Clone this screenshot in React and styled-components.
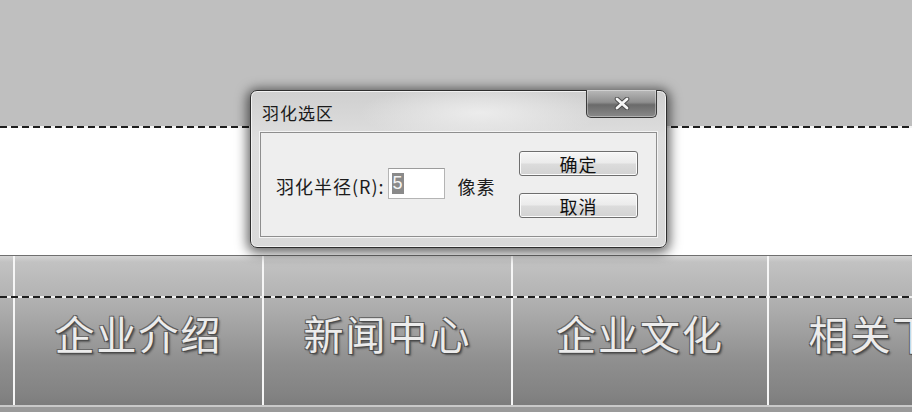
import React from "react";
import styled, { createGlobalStyle } from "styled-components";

const GlobalStyle = createGlobalStyle`
  html, body {
    margin: 0;
    padding: 0;
    background: #ffffff;
  }
  body {
    font-family: "Noto Sans CJK SC", "Noto Sans", sans-serif;
  }
`;

const navItems = ["", "企业介绍", "新闻中心", "企业文化", "相关下载"];
const navWidths = [13, 249, 249, 256, 249];

const Page = styled.div`
  position: relative;
  width: 912px;
  height: 412px;
  overflow: hidden;
  display: flex;
  flex-direction: column;
  background: #ffffff;
`;

const TopBand = styled.div`
  height: 126px;
  background: #bfbfbf;
  flex-shrink: 0;
`;

const Ants = styled.div`
  height: 2px;
  flex-shrink: 0;
  background: repeating-linear-gradient(90deg, #1e1e1e 0 7px, #f2f2f2 7px 11px);
`;

const WhiteBand = styled.div`
  height: 127px;
  flex-shrink: 0;
  background: #ffffff;
`;

const NavBar = styled.div`
  position: relative;
  display: flex;
  height: 149px;
  flex-shrink: 0;
  overflow: hidden;
  border-top: 1px solid #6f6f6f;
  border-bottom: 2px solid #c9c9c9;
  background: linear-gradient(
    180deg,
    #d4d4d4 0px,
    #c2c2c2 6px,
    #b3b3b3 40px,
    #a3a3a3 70px,
    #8f8f8f 105px,
    #828282 140px,
    #7c7c7c 149px
  );

  &::after {
    content: "";
    position: absolute;
    left: 0;
    right: 0;
    top: 40px;
    height: 2px;
    background: repeating-linear-gradient(90deg, #1e1e1e 0 7px, #eeeeee 7px 11px);
  }
`;

const NavCell = styled.div`
  box-sizing: border-box;
  flex-shrink: 0;
  width: ${(p) => p.$w}px;
  border-left: ${(p) => (p.$first ? "none" : "2px solid #f6f6f6")};
  display: flex;
  align-items: center;
  justify-content: center;
  padding-top: 4px;
  font-size: 40px;
  letter-spacing: 2px;
  white-space: nowrap;
  color: #ececec;
  text-shadow: 1px 1px 0 #4a4a4a, -1px -1px 0 #6a6a6a, 1px -1px 0 #5a5a5a,
    -1px 1px 0 #5a5a5a, 2px 2px 2px #555;
`;

const Footer = styled.div`
  flex: 1;
  background: #9a9a9a;
`;

const Dialog = styled.div`
  position: absolute;
  left: 250px;
  top: 90px;
  width: 417px;
  height: 158px;
  box-sizing: border-box;
  border: 1px solid #2e2e2e;
  border-radius: 7px;
  background: linear-gradient(180deg, #cfcfcf 0%, #dedede 30%, #d9d9d9 100%);
  box-shadow: 0 2px 12px 3px rgba(0, 0, 0, 0.6), inset 0 0 0 1px #f2f2f2;
  display: flex;
  flex-direction: column;
  padding: 0 9px 10px 9px;
`;

const TitleBar = styled.div`
  height: 41px;
  display: flex;
  justify-content: space-between;
  align-items: flex-start;
  padding-left: 2px;
  background: radial-gradient(ellipse 120px 30px at 220px 22px, #ececec 0%, rgba(236, 236, 236, 0) 100%);
`;

const Title = styled.div`
  padding-top: 9px;
  font-size: 17px;
  letter-spacing: 1px;
  color: #1a1a1a;
`;

const CloseButton = styled.div`
  width: 71px;
  height: 28px;
  box-sizing: border-box;
  margin-top: -1px;
  border: 1px solid #3a3a3a;
  border-top: none;
  border-radius: 0 0 5px 5px;
  background: linear-gradient(180deg, #b9b9b9 0%, #8f8f8f 45%, #6a6a6a 55%, #8a8a8a 100%);
  box-shadow: inset 0 0 0 1px rgba(255, 255, 255, 0.35);
  display: flex;
  align-items: center;
  justify-content: center;
`;

const Panel = styled.div`
  flex: 1;
  box-sizing: border-box;
  border: 1px solid #8e8e8e;
  box-shadow: 0 0 0 1px #f4f4f4;
  background: #eeeeee;
  display: flex;
  align-items: center;
  justify-content: space-between;
  padding: 0 18px 0 15px;
`;

const Field = styled.div`
  display: flex;
  align-items: center;
  font-size: 18px;
  letter-spacing: 1px;
  color: #1c1c1c;
  margin-top: 3px;
`;

const Label = styled.span`
  margin-right: 3px;
`;

const Input = styled.div`
  width: 57px;
  height: 31px;
  box-sizing: border-box;
  border: 1px solid #b4b4b4;
  border-top-color: #9c9c9c;
  background: #ffffff;
  display: flex;
  align-items: center;
  padding-left: 3px;
  margin-top: -6px;
`;

const Selected = styled.span`
  background: #8a8a8a;
  color: #f4f4f4;
  font-family: "Liberation Sans", Arial, sans-serif;
  font-size: 18px;
  letter-spacing: 0;
  line-height: 21px;
  padding: 0 1px;
`;

const Unit = styled.span`
  margin-left: 13px;
`;

const Buttons = styled.div`
  display: flex;
  flex-direction: column;
  gap: 17px;
`;

const Button = styled.div`
  width: 119px;
  height: 25px;
  box-sizing: border-box;
  border: 1px solid #6e6e6e;
  border-radius: 3px;
  background: linear-gradient(180deg, #f6f6f6 0%, #ebebeb 48%, #dcdcdc 52%, #d2d2d2 100%);
  box-shadow: inset 0 0 0 1px #fbfbfb;
  display: flex;
  align-items: center;
  justify-content: center;
  font-size: 18px;
  letter-spacing: 1px;
  color: #111;
`;

const CloseIcon = () => (
  <svg width="16" height="13" viewBox="0 0 16 13">
    <path d="M3 2 L13 11 M13 2 L3 11" stroke="#4a4a4a" strokeWidth="4.5" strokeLinecap="round" />
    <path d="M3 2 L13 11 M13 2 L3 11" stroke="#f6f6f6" strokeWidth="2.8" strokeLinecap="round" />
  </svg>
);

export default function App() {
  return (
    <Page>
      <GlobalStyle />
      <TopBand />
      <Ants />
      <WhiteBand />
      <NavBar>
        {navItems.map((item, index) => (
          <NavCell key={index} $w={navWidths[index]} $first={index === 0}>
            {item}
          </NavCell>
        ))}
      </NavBar>
      <Footer />

      <Dialog>
        <TitleBar>
          <Title>羽化选区</Title>
          <CloseButton>
            <CloseIcon />
          </CloseButton>
        </TitleBar>
        <Panel>
          <Field>
            <Label>羽化半径(R):</Label>
            <Input>
              <Selected>5</Selected>
            </Input>
            <Unit>像素</Unit>
          </Field>
          <Buttons>
            <Button>确定</Button>
            <Button>取消</Button>
          </Buttons>
        </Panel>
      </Dialog>
    </Page>
  );
}
